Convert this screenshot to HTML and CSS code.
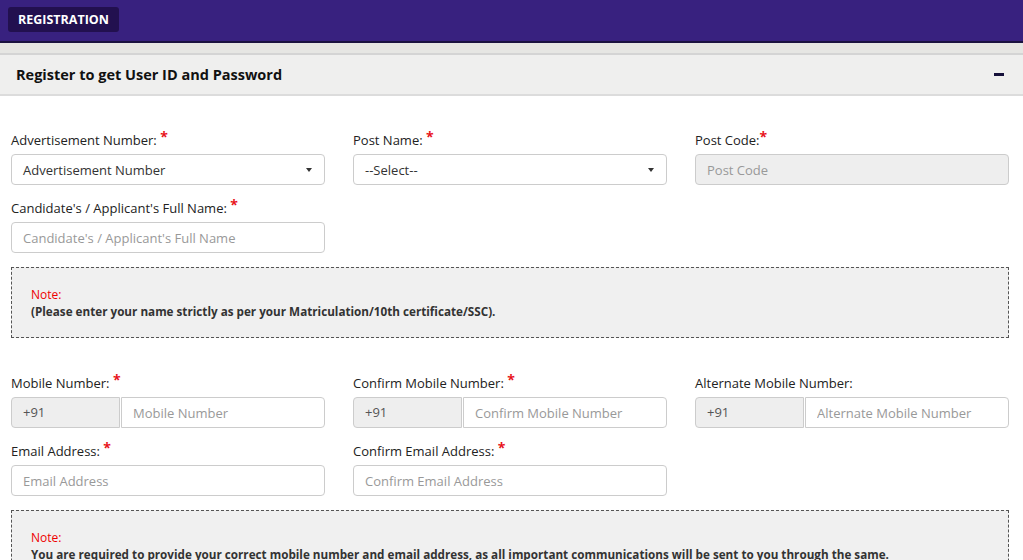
FILE: index.html
```html
<!DOCTYPE html>
<html lang="en">
<head>
  <meta charset="UTF-8" />
  <meta name="viewport" content="width=device-width, initial-scale=1.0" />
  <title>Registration</title>
  <link rel="stylesheet" href="styles.css">
</head>
<body>
  <div class="topbar">
    <span class="badge">REGISTRATION</span>
  </div>
  <div class="gap-band"></div>
  <div class="panel-heading">
    <span>Register to get User ID and Password</span>
    <span class="collapse-icon"></span>
  </div>
  <form class="reg-form">
    <div class="form-row">
      <div class="form-group">
        <label>Advertisement Number: <span class="req">*</span></label>
        <div class="select-box">Advertisement Number<span class="caret"></span></div>
      </div>
      <div class="form-group">
        <label>Post Name: <span class="req">*</span></label>
        <div class="select-box">--Select--<span class="caret"></span></div>
      </div>
      <div class="form-group">
        <label>Post Code:<span class="req">*</span></label>
        <input type="text" placeholder="Post Code" disabled />
      </div>
    </div>
    <div class="form-row">
      <div class="form-group">
        <label>Candidate's / Applicant's Full Name: <span class="req">*</span></label>
        <input type="text" placeholder="Candidate's / Applicant's Full Name" />
      </div>
    </div>
    <div class="note-box">
      <p class="note-title">Note:</p>
      <p class="note-text">(Please enter your name strictly as per your Matriculation/10th certificate/SSC).</p>
    </div>
    <div class="form-row">
      <div class="form-group">
        <label>Mobile Number: <span class="req">*</span></label>
        <div class="input-group">
          <span class="addon">+91</span>
          <input type="text" placeholder="Mobile Number" />
        </div>
      </div>
      <div class="form-group">
        <label>Confirm Mobile Number: <span class="req">*</span></label>
        <div class="input-group">
          <span class="addon">+91</span>
          <input type="text" placeholder="Confirm Mobile Number" />
        </div>
      </div>
      <div class="form-group">
        <label>Alternate Mobile Number:</label>
        <div class="input-group">
          <span class="addon">+91</span>
          <input type="text" placeholder="Alternate Mobile Number" />
        </div>
      </div>
    </div>
    <div class="form-row">
      <div class="form-group">
        <label>Email Address: <span class="req">*</span></label>
        <input type="text" placeholder="Email Address" />
      </div>
      <div class="form-group">
        <label>Confirm Email Address: <span class="req">*</span></label>
        <input type="text" placeholder="Confirm Email Address" />
      </div>
    </div>
    <div class="note-box">
      <p class="note-title">Note:</p>
      <p class="note-text">You are required to provide your correct mobile number and email address, as all important communications will be sent to you through the same.</p>
    </div>
  </form>
</body>
</html>
```

FILE: styles.css
```css
body { margin: 0; font-family: "Open Sans", sans-serif; color: #222; background: #fff; }
.topbar { height: 43px; box-sizing: border-box; background: #38217f; border-bottom: 2px solid #1b1240; display: flex; align-items: center; padding-left: 8px; }
.badge { background: #22104f; color: #fff; font-weight: bold; font-size: 12.5px; padding: 4px 10px; border-radius: 3px; margin-top: -2px; }
.gap-band { height: 10px; background: #e6e6e3; border-bottom: 2px solid #d4d4d4; }
.panel-heading { height: 39px; background: #efefee; border-bottom: 2px solid #dcdcdc; display: flex; align-items: center; justify-content: space-between; padding: 0 19px 0 16px; font-weight: bold; font-size: 14.5px; color: #111; }
.collapse-icon { width: 10px; height: 3px; background: #15103a; }
.reg-form { padding: 35px 14px 0 11px; }
.form-row { display: grid; grid-template-columns: 314px 314px 314px; column-gap: 28px; }
.form-group { margin-bottom: 14px; }
label { display: block; font-size: 13px; line-height: 18px; margin-bottom: 5px; color: #222; }
.req { color: #e8141c; font-weight: bold; font-size: 14px; line-height: 0; vertical-align: 3px; }
input, .select-box { display: block; width: 100%; box-sizing: border-box; height: 31px; padding: 0 11px; border: 1px solid #ccc; border-radius: 4px; font-family: "Open Sans", sans-serif; font-size: 13px; color: #333; background: #fff; }
input::placeholder { color: #999; }
input:disabled { background: #eee; }
.select-box { display: flex; align-items: center; justify-content: space-between; }
.caret { width: 0; height: 0; border-left: 3px solid transparent; border-right: 3px solid transparent; border-top: 4px solid #333; margin-right: 1px; }
.input-group { display: flex; }
.addon { width: 109px; flex: none; box-sizing: border-box; height: 31px; line-height: 29px; padding-left: 11px; background: #eee; border: 1px solid #ccc; border-radius: 4px 0 0 4px; font-size: 13px; color: #555; }
.input-group input { border-radius: 0 4px 4px 0; margin-left: 1px; }
.note-box { background: #f0f0f0; border: 1px dashed #555; padding: 19px 19px 18px; margin-bottom: 36px; }
.note-title { margin: 0; color: #e00; font-size: 12px; line-height: 16px; }
.note-text { margin: 0; font-weight: bold; font-size: 11.7px; line-height: 16px; color: #333; }
```
